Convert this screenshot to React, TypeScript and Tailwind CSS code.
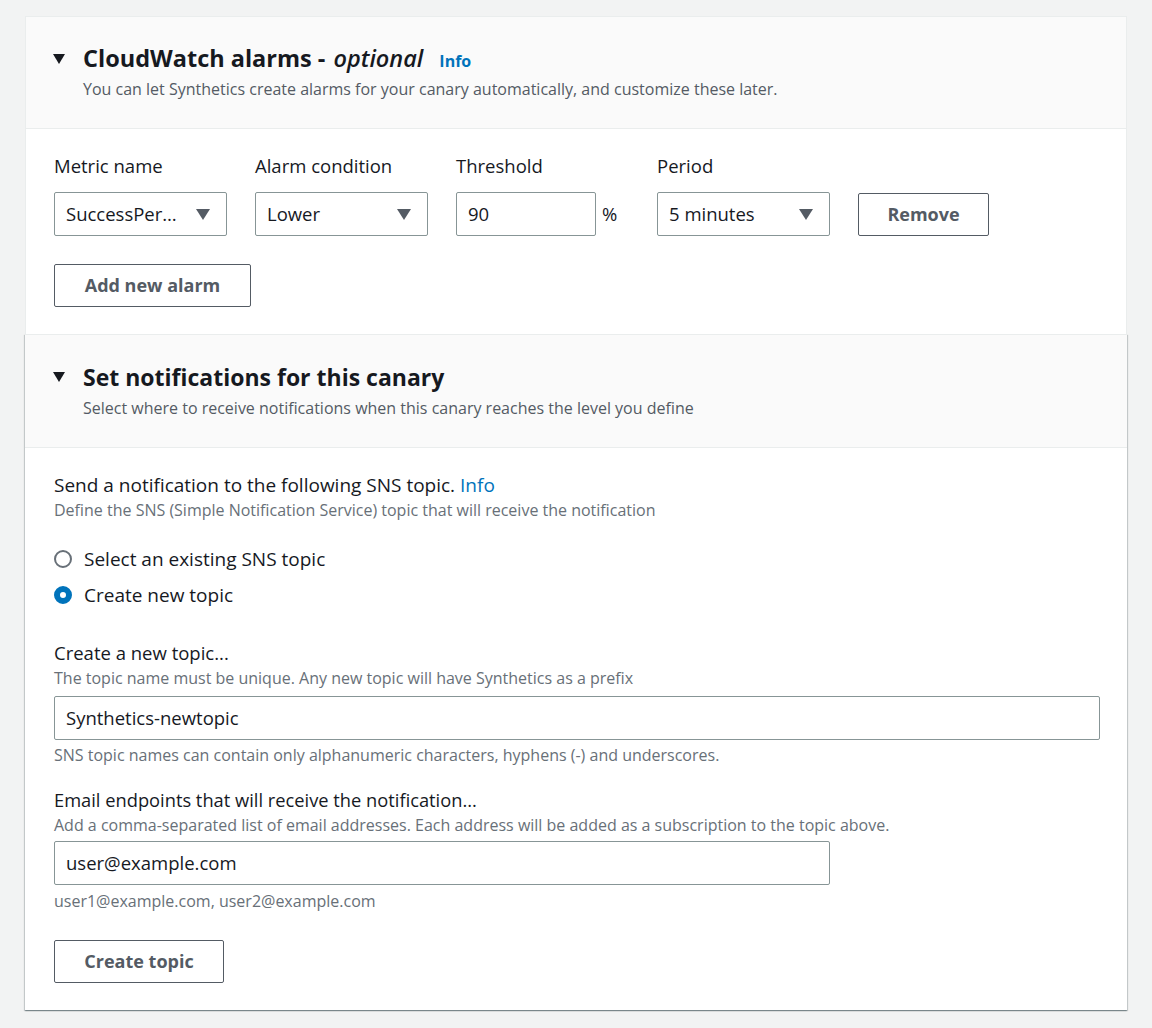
import React, { useState } from 'react';

const font = { fontFamily: '"Open Sans", "Liberation Sans", sans-serif' };

function Caret() {
    return (
        <svg width="12" height="10" viewBox="0 0 12 10" className="shrink-0">
            <path d="M0 0 H12 L6 10 Z" fill="#16191f" />
        </svg>
    );
}

function SelectBox({ value, width = 'w-[173px]' }: { value: string; width?: string }) {
    return (
        <div className={`${width} h-[44px] border border-[#879596] rounded-[2px] bg-white flex items-center justify-between pl-[11px] pr-[16px]`}>
            <span className="text-[18.5px] text-[#16191f] whitespace-nowrap">{value}</span>
            <svg width="14" height="11" viewBox="0 0 14 11" className="shrink-0 ml-2">
                <path d="M0 0 H14 L7 11 Z" fill="#545b64" />
            </svg>
        </div>
    );
}

function Button({ children, width }: { children: React.ReactNode; width: string }) {
    return (
        <button className={`${width} h-[43px] border border-[#545b64] rounded-[2px] bg-white text-[18px] font-bold text-[#545b64] flex items-center justify-center`}>
            {children}
        </button>
    );
}

function SectionHeader({
    title,
    description,
    size,
    gap,
    pad,
}: {
    title: React.ReactNode;
    description: string;
    size: string;
    gap: string;
    pad: string;
}) {
    return (
        <div className={`bg-[#fafafa] border-b border-[#eaeded] ${pad} pr-6 pt-[26px] pb-[28px]`}>
            <div className="flex items-center gap-[18px] h-[32px]">
                <Caret />
                <h2 className={`${size} leading-[32px] font-bold text-[#16191f]`}>{title}</h2>
            </div>
            <p className={`ml-[30px] ${gap} text-[16px] leading-[22px] text-[#545b64]`}>{description}</p>
        </div>
    );
}

function Radio({ checked, label, onClick }: { checked: boolean; label: string; onClick: () => void }) {
    return (
        <label className="flex items-center gap-[12px] h-[26px] cursor-pointer" onClick={onClick}>
            <span
                className={`w-[18px] h-[18px] rounded-full shrink-0 ${
                    checked ? 'border-[6px] border-[#0073bb] bg-white' : 'border-2 border-[#687078] bg-white'
                }`}
            />
            <span className="text-[19px] text-[#16191f]">{label}</span>
        </label>
    );
}

export default function App() {
    const [topicMode, setTopicMode] = useState<'existing' | 'new'>('new');

    return (
        <div className="min-h-screen bg-[#f2f3f3] pt-[16px] pl-[25px] pr-[25px] pb-[16px]" style={font}>
            <div className="w-[1102px]">
                {/* CloudWatch alarms */}
                <div className="bg-white border-x border-t border-[#eaeded]">
                    <SectionHeader
                        size="text-[23.5px]"
                        gap="mt-[3px]"
                        pad="pl-[27px]"
                        title={
                            <span className="flex items-baseline">
                                CloudWatch alarms - <em className="ml-[8px] font-semibold italic">optional</em>
                                <a className="ml-[16px] text-[16px] font-bold text-[#0073bb]">Info</a>
                            </span>
                        }
                        description="You can let Synthetics create alarms for your canary automatically, and customize these later."
                    />
                    <div className="pl-[28px] pt-[24px] pb-[27px]">
                        <div className="flex items-end gap-[28px]">
                            <div>
                                <div className="text-[18.5px] leading-[26px] text-[#16191f] mb-[13px]">Metric name</div>
                                <SelectBox value="SuccessPer…" />
                            </div>
                            <div>
                                <div className="text-[18.5px] leading-[26px] text-[#16191f] mb-[13px]">Alarm condition</div>
                                <SelectBox value="Lower" />
                            </div>
                            <div className="w-[173px]">
                                <div className="text-[18.5px] leading-[26px] text-[#16191f] mb-[13px]">Threshold</div>
                                <div className="flex items-center gap-[6px]">
                                    <div className="w-[140px] h-[44px] border border-[#879596] rounded-[2px] flex items-center px-[11px] text-[18.5px] text-[#16191f]">
                                        90
                                    </div>
                                    <span className="text-[18.5px] text-[#16191f]">%</span>
                                </div>
                            </div>
                            <div>
                                <div className="text-[18.5px] leading-[26px] text-[#16191f] mb-[13px]">Period</div>
                                <SelectBox value="5 minutes" />
                            </div>
                            <Button width="w-[131px]">Remove</Button>
                        </div>
                        <div className="mt-[28px]">
                            <Button width="w-[197px]">Add new alarm</Button>
                        </div>
                    </div>
                </div>

                {/* Notifications */}
                <div className="bg-white border-t border-[#eaeded] shadow-[0_1px_1px_0_rgba(0,28,36,0.3),1px_1px_1px_0_rgba(0,28,36,0.15),-1px_1px_1px_0_rgba(0,28,36,0.15)]">
                    <SectionHeader
                        size="text-[23px]"
                        gap="mt-[4px]"
                        pad="pl-[28px]"
                        title="Set notifications for this canary"
                        description="Select where to receive notifications when this canary reaches the level you define"
                    />
                    <div className="pl-[29px] pr-[27px] pt-[24px] pb-[27px]">
                        <div className="text-[19px] leading-[26px] text-[#16191f]">
                            Send a notification to the following SNS topic. <a className="text-[#0073bb]">Info</a>
                        </div>
                        <div className="text-[16px] leading-[22px] text-[#687078] mt-[1px]">
                            Define the SNS (Simple Notification Service) topic that will receive the notification
                        </div>

                        <div className="mt-[25px] flex flex-col gap-[10px]">
                            <Radio checked={topicMode === 'existing'} label="Select an existing SNS topic" onClick={() => setTopicMode('existing')} />
                            <Radio checked={topicMode === 'new'} label="Create new topic" onClick={() => setTopicMode('new')} />
                        </div>

                        <div className="mt-[32px] text-[18.5px] leading-[26px] text-[#16191f]">Create a new topic...</div>
                        <div className="text-[16px] leading-[22px] text-[#687078] mt-[1px]">
                            The topic name must be unique. Any new topic will have Synthetics as a prefix
                        </div>
                        <div className="mt-[7px] w-full h-[44px] border border-[#879596] rounded-[2px] flex items-center px-[11px] text-[18.5px] text-[#16191f]">
                            Synthetics-newtopic
                        </div>
                        <div className="mt-[4px] text-[16px] leading-[22px] text-[#687078]">
                            SNS topic names can contain only alphanumeric characters, hyphens (-) and underscores.
                        </div>

                        <div className="mt-[21px] text-[18.3px] leading-[26px] text-[#16191f]">Email endpoints that will receive the notification...</div>
                        <div className="text-[16px] leading-[22px] text-[#687078] mt-[1px]">
                            Add a comma-separated list of email addresses. Each address will be added as a subscription to the topic above.
                        </div>
                        <div className="mt-[5px] w-[776px] h-[44px] border border-[#879596] rounded-[2px] flex items-center px-[11px] text-[18.5px] text-[#16191f]">
                            user@example.com
                        </div>
                        <div className="mt-[5px] text-[16px] leading-[22px] text-[#687078]">user1@example.com, user2@example.com</div>

                        <div className="mt-[28px]">
                            <Button width="w-[170px]">Create topic</Button>
                        </div>
                    </div>
                </div>
            </div>
        </div>
    );
}
